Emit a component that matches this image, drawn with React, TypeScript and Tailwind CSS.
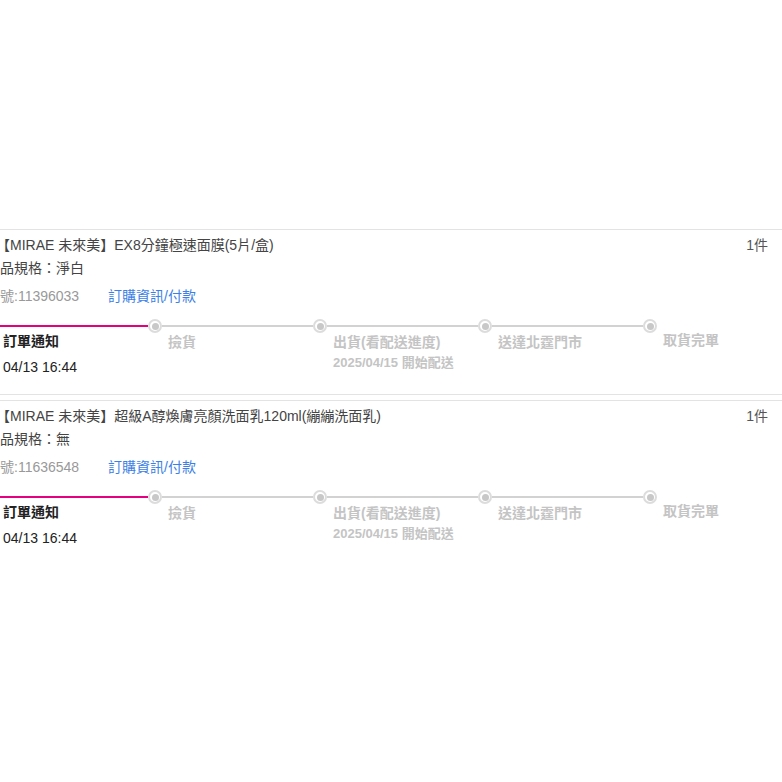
type Step = { label: string; sub?: string; done?: boolean };

type Order = {
  title: string;
  spec: string;
  orderNo: string;
  qty: string;
};

const orders: Order[] = [
  {
    title: "【MIRAE 未來美】EX8分鐘極速面膜(5片/盒)",
    spec: "商品規格：淨白",
    orderNo: "11396033",
    qty: "1件",
  },
  {
    title: "【MIRAE 未來美】超級A醇煥膚亮顏洗面乳120ml(繃繃洗面乳)",
    spec: "商品規格：無",
    orderNo: "11636548",
    qty: "1件",
  },
];

const steps: Step[] = [
  { label: "訂單通知", sub: "04/13 16:44", done: true },
  { label: "撿貨" },
  { label: "出貨(看配送進度)", sub: "2025/04/15 開始配送" },
  { label: "送達北霆門市" },
  { label: "取貨完單" },
];

function Node() {
  return (
    <div className="flex h-[14px] w-[14px] shrink-0 items-center justify-center rounded-full border-2 border-[#dcdcdc] bg-white">
      <div className="h-[7px] w-[7px] rounded-full bg-[#c8c8c8]" />
    </div>
  );
}

function Timeline() {
  return (
    <div className="-ml-[17px] flex">
      {steps.map((step, i) => {
        const last = i === steps.length - 1;
        return (
          <div key={step.label} className="w-[165px] shrink-0">
            {/* bar */}
            <div className="flex h-[14px] items-center">
              {i === 0 ? (
                <div className="h-[2px] w-full bg-[#e4007f]" />
              ) : (
                <>
                  <Node />
                  {!last && <div className="h-[2px] flex-1 bg-[#d2d2d2]" />}
                </>
              )}
            </div>
            {/* label */}
            <div className={`pl-[20px] ${last ? "-mt-[2px]" : ""}`}>
              {step.done ? (
                <>
                  <div className="-mt-[1px] text-[14px] font-bold leading-[18px] text-[#222]">{step.label}</div>
                  <div className="mt-[8px] text-[14px] leading-[18px] text-[#222]">{step.sub}</div>
                </>
              ) : (
                <>
                  <div className="text-[14px] font-bold leading-[18px] text-[#c4c4c4]">{step.label}</div>
                  {step.sub && (
                    <div className="mt-[4px] text-[13px] font-bold leading-[16px] text-[#c4c4c4]">
                      {step.sub}
                    </div>
                  )}
                </>
              )}
            </div>
          </div>
        );
      })}
    </div>
  );
}

function OrderCard({ order, last }: { order: Order; last: boolean }) {
  return (
    <div
      className={`border-t border-[#e3e3e3] pt-[5px] ${
        last ? "h-[165px]" : "mb-[5px] h-[166px] border-b"
      }`}
    >
      <div className="flex items-start justify-between pr-[14px]">
        <div className="-ml-[4px] text-[14px] leading-[20px] text-[#444]">{order.title}</div>
        <div className="text-[14px] leading-[20px] text-[#555]">{order.qty}</div>
      </div>
      <div className="mt-[3px] -ml-[14px] text-[14px] leading-[20px] text-[#444]">{order.spec}</div>
      <div className="mt-[8px] -ml-[42px] flex text-[14px] leading-[20px]">
        <span className="w-[150px] text-[#999]">訂單編號:{order.orderNo}</span>
        <span className="text-[#3d7fe6]">訂購資訊/付款</span>
      </div>
      <div className="mt-[13px]">
        <Timeline />
      </div>
    </div>
  );
}

export default function App() {
  return (
    <div className="h-[782px] w-full overflow-hidden bg-white pt-[229px] font-['Liberation_Sans','Noto_Sans_CJK_TC',sans-serif]">
      {orders.map((order, i) => (
        <OrderCard key={order.orderNo} order={order} last={i === orders.length - 1} />
      ))}
    </div>
  );
}
